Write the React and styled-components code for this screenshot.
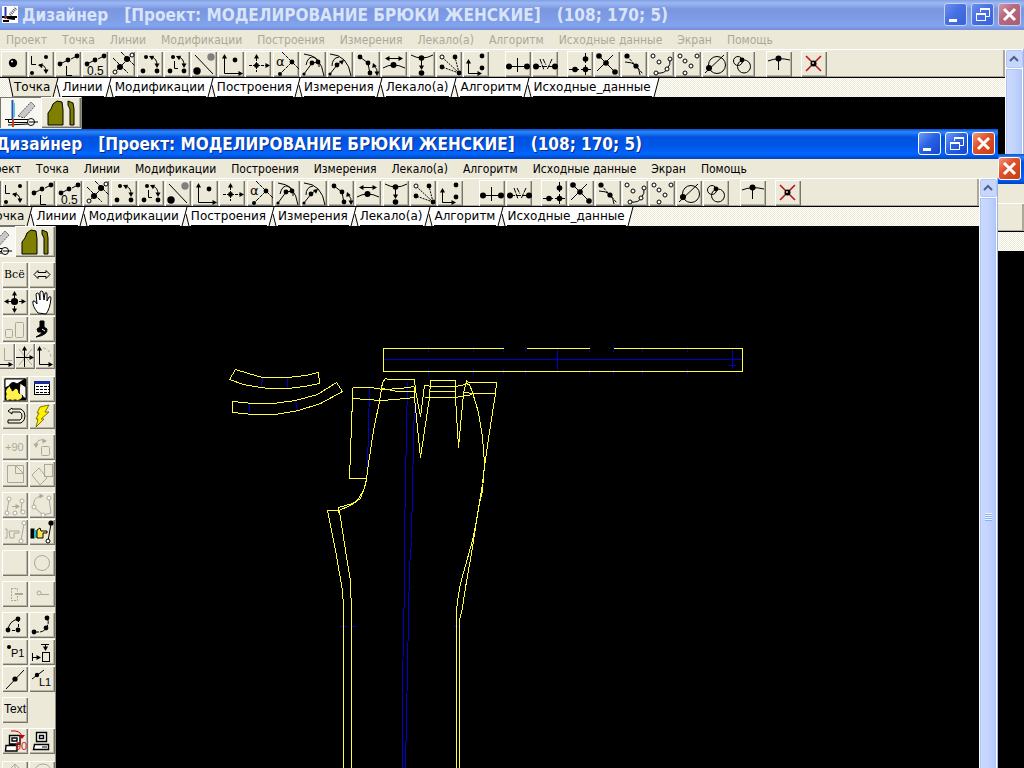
import React from 'react';
import styled, { createGlobalStyle, css } from 'styled-components';

const GlobalStyle = createGlobalStyle`
    * {
        box-sizing: border-box;
    }
    body {
        margin: 0;
        background: #000;
    }
    button {
        font: inherit;
        padding: 0;
        border: 0;
        color: inherit;
    }
`;

const hatch = css`
    background-color: #fffffb;
    background-image: conic-gradient(#ece9d8 25%, transparent 0 50%, #ece9d8 0 75%, transparent 0);
    background-size: 2px 2px;
`;

const raised = css`
    box-shadow: inset 1px 1px 0 #fff, inset -1px -1px 0 #77756b, inset -2px -2px 0 #b9b6a5;
`;

const Desktop = styled.main`
    position: relative;
    min-height: 100vh;
    overflow: hidden;
    background: #000;
`;

const WindowFrame = styled.section`
    position: absolute;
    top: ${props => props.$top}px;
    left: ${props => props.$shift}px;
    right: ${props => -props.$shift}px;
    bottom: 0;
    display: flex;
    flex-direction: column;
    overflow: hidden;
    background: #000;
`;

const TitleBar = styled.header`
    flex: none;
    display: flex;
    align-items: center;
    gap: 3px;
    height: 30px;
    padding: 0 3px 1px 2px;
    color: ${props => (props.$active ? '#fff' : '#d8e4f8')};
    background: ${props => (props.$active
        ? 'linear-gradient(#0a4fd0 0, #2b86fb 3px, #0053e1 8px, #0055e5 16px, #0066ff 25px, #0048c8 29px)'
        : 'linear-gradient(#7f9fe6 0, #9db8f2 3px, #7b96e0 9px, #7e9be4 18px, #82a5f0 26px, #7890da 29px)')};
`;

const TitleText = styled.h1`
    flex: 1;
    display: flex;
    gap: 16px;
    margin: 0;
    font-family: 'DejaVu Sans Condensed', 'DejaVu Sans', sans-serif;
    font-size: 17px;
    font-weight: 700;
    line-height: 28px;
    white-space: nowrap;
    text-shadow: ${props => (props.$active ? '1px 1px 0 #0a2a80' : 'none')};
`;

const CaptionButtons = styled.div`
    display: flex;
    gap: 4px;
`;

const CaptionButton = styled.button`
    width: 23px;
    height: 23px;
    border: 1px solid ${props => (props.$active ? '#fff' : '#c3d2f5')};
    border-radius: 3px;
    background: ${props => (props.$close
        ? (props.$active ? 'linear-gradient(135deg, #f09a80, #e0532c 40%, #c83c10)' : 'linear-gradient(135deg, #cf9aa8, #b7697d 40%, #ab5b70)')
        : (props.$active ? 'linear-gradient(135deg, #6f9bf8, #2a63e4 45%, #1445cc)' : 'linear-gradient(135deg, #6c8ff0, #4770e2 45%, #3a62da)'))};
    svg {
        display: block;
    }
`;

const MenuBar = styled.nav`
    flex: none;
    display: flex;
    gap: 15px;
    height: 19px;
    padding-left: 6px;
    font-family: 'DejaVu Sans Condensed', 'DejaVu Sans', sans-serif;
    font-size: 12px;
    line-height: 20px;
    color: ${props => (props.$active ? '#000' : '#aca899')};
    background: #ece9d8;
`;

const MenuItem = styled.button`
    background: none;
    white-space: nowrap;
`;

const Workspace = styled.div`
    flex: 1;
    display: flex;
    min-height: 0;
`;

const Sheet = styled.div`
    flex: 1;
    display: flex;
    flex-direction: column;
    min-width: 0;
`;

const ToolBar = styled.div`
    flex: none;
    display: flex;
    height: 29px;
    padding: 1px 0 0 1px;
    background: #ece9d8;
    border-top: 1px solid #fff;
    border-bottom: 1px solid #000;
    box-shadow: inset -2px -1px 0 #aca899;
`;

const ToolGroup = styled.div`
    display: flex;
    gap: 1px;
    margin-right: ${props => props.$after}px;
`;

const ToolButton = styled.button`
    flex: none;
    width: ${props => props.$width || 26}px;
    height: ${props => props.$height || 26}px;
    overflow: hidden;
    background: #ece9d8;
    ${raised}
    ${props => props.$pressed && css`
        background: #f8f7f0;
        box-shadow: inset 1px 1px 0 #77756b;
    `}
    svg {
        display: block;
    }
`;

const TabStrip = styled.div`
    flex: none;
    display: flex;
    height: 19px;
    padding-left: 8px;
    font-family: 'DejaVu Sans', sans-serif;
    font-size: 12px;
    line-height: 18px;
    ${hatch}
`;

const Tab = styled.button`
    height: 19px;
    padding-right: 1px;
    color: #000;
    background: ${props => (props.$selected ? '#ece9d8' : '#fff')};
    border-bottom: 1px solid ${props => (props.$selected ? '#77756b' : '#000')};
    white-space: nowrap;
`;

const TabEdge = styled.svg`
    flex: none;
    display: block;
`;

const Body = styled.div`
    flex: 1;
    display: flex;
    min-height: 0;
`;

const SidePanel = styled.aside`
    flex: none;
    display: flex;
    flex-direction: column;
    gap: 5px;
    width: 82px;
    overflow: hidden;
    background: #ece9d8;
    border-right: 1px solid #8f8c7c;
`;

const SideGroup = styled.div`
    display: grid;
    grid-template-columns: repeat(2, 26px);
    gap: 1px;
    padding: ${props => (props.$spaced ? 2 : 0)}px 0 0 28px;
`;

const ModeGroup = styled.div`
    display: flex;
`;

const AxesRow = styled.div`
    grid-column: 1 / -1;
    display: flex;
    justify-content: flex-end;
`;

const Canvas = styled.div`
    flex: 1;
    min-width: 0;
    overflow: hidden;
    background: #000;
    svg {
        display: block;
    }
`;

const ScrollTrack = styled.div`
    flex: none;
    display: flex;
    flex-direction: column;
    width: 19px;
    padding: 1px 0 0 1px;
    background: #fff;
    border-right: 1px solid #9db4e8;
`;

const ScrollArrow = styled.button`
    flex: none;
    width: 17px;
    height: 18px;
    border: 1px solid #b5c7f3;
    border-radius: 2px;
    background: #c6d6fd;
    svg {
        display: block;
    }
`;

const ScrollThumb = styled.div`
    flex: 1;
    display: flex;
    justify-content: center;
    margin-top: 1px;
    width: 16px;
    padding-top: 314px;
    border: 1px solid #b0c3f2;
    border-bottom: 0;
    background: linear-gradient(90deg, #cbd9fe, #c1d2fc 60%, #b4c9fa);
`;

const Grip = styled.span`
    width: 7px;
    height: 8px;
    background: repeating-linear-gradient(#eef4fe 0 1px, #8cb0f8 1px 2px);
`;

/* ---------- icon parts ---------- */

const Dot = ({ x, y, r = 2.4, fill = '#000' }) => <circle cx={x} cy={y} r={r} fill={fill} stroke="none" />;
const Ring = ({ x, y, r = 2 }) => <circle cx={x} cy={y} r={r} fill="#fff" />;
const Head = ({ x, y, turn = 0 }) => (
    <path d="M0 0 L-2.5 4.5 L2.5 4.5 Z" fill="currentColor" stroke="none" transform={`translate(${x} ${y}) rotate(${turn})`} />
);

const Glyph = ({ children, width = 26, height = 26, muted }) => (
    <svg width={width} height={height} viewBox={`0 0 ${width} ${height}`} fill="none"
        stroke="currentColor" color={muted ? '#aca899' : '#000'} aria-hidden="true">
        {children}
    </svg>
);

const pointTools = [
    ['Точка', <><Dot x={12} y={12} r={4.2} /><circle cx="11" cy="10.500" r="1" fill="#fff" stroke="none" /></>],
    ['Точка L', <><path d="M3.500 5V13.500H8M11 14Q18 13 18 21" /><Head x={10} y={14} turn={-80} /><Head x={18} y={23} turn={180} /><Dot x={18} y={6} r={2} /><Dot x={4} y={22} r={2} /></>],
    ['Длина', <><path d="M5 13L13 9M16 8L22 5" /><path d="M11.500 15V24.500H17" /><Dot x={5} y={13} /><Dot x={13} y={9} /><Dot x={22} y={5} /></>],
    ['Доля', <><path d="M5 13L13 9M16 8L22 5" /><Dot x={5} y={13} /><Dot x={13} y={9} /><Dot x={22} y={5} /><text x="5" y="24" fontSize="12" fontFamily="Liberation Sans, sans-serif" fill="#000" stroke="none">0.5</text></>],
    ['Пересечение', <><path d="M6 21L23 4M4 7L19 22M12 1L26 15" strokeDasharray="4 1" /><Ring x={23} y={4} /><Ring x={6} y={21} /><Dot x={18} y={8} r={3} /><Dot x={11} y={16} r={3} /></>],
    ['Поворот', <><path d="M15 6Q20 8 20 14" /><Head x={12} y={5} turn={-65} /><Head x={20} y={17} turn={180} /><Dot x={9} y={6} r={2} /><Dot x={6} y={20} /><Dot x={20} y={20} /></>],
    ['Поворот L', <><path d="M15 6Q20 8 20 14M10.500 10V17.500H14" /><Head x={12} y={5} turn={-65} /><Head x={20} y={17} turn={180} /><Dot x={9} y={6} r={2} /><Dot x={6} y={20} /><Dot x={20} y={20} /></>],
    ['Отражение', <><path d="M4 4L22 23" /><Dot x={6} y={20} r={3.7} /><Dot x={20} y={6} r={3.7} fill="#808080" /></>],
    ['Оси', <><path d="M6.500 6V22.500H22" /><Head x={6.5} y={3} /><Head x={25} y={22.5} turn={90} /><Dot x={17} y={9} /></>],
    ['Сдвиг', <><path d="M4 14.500H22M11.500 7V21" strokeDasharray="3 1" /><Head x={11.5} y={3} /><Head x={25} y={14.5} turn={90} /><Dot x={11.5} y={14.5} /></>],
    ['Угол', <><path d="M9 1L26 18M19 11L7 23" strokeDasharray="4 1" /><text x="3" y="15" fontSize="13" fontFamily="DejaVu Sans, sans-serif" fill="#000" stroke="none">α</text><Dot x={19} y={11} /><Dot x={7} y={23} r={2} /></>],
    ['Дуга', <><path d="M4 3Q21 4 24 25M4 23L12 12L19 11M6 14Q8 5 14 6Q20 9 19 16" /><Dot x={12} y={12} /><Dot x={18} y={11} /><Dot x={4} y={23} r={1.6} /></>],
    ['Радиус', <><path d="M3 3Q21 4 24 25M3 23L10 14L15 10M5 15Q5 7 12 6" /><Head x={17} y={9} turn={50} /><Dot x={10} y={14} /><Dot x={3} y={23} r={1.6} /></>],
    ['Вдоль линии', <><path d="M6 6L14 12L16 23M20 15Q24 18 23 22" /><Head x={19} y={12} turn={-20} /><Head x={23} y={25} turn={180} /><Dot x={6} y={6} /><Dot x={14} y={12} /><Dot x={16} y={22} /></>],
    ['Касание', <><path d="M7 7.500H19M2 17Q12 11 24 17" /><Head x={4} y={7.5} turn={-90} /><Head x={22} y={7.5} turn={90} /><Dot x={12.5} y={14} r={3} /></>],
    ['Проекция', <><path d="M2 4Q13 10 24 4M12.500 8V18" /><Head x={12.5} y={19} turn={180} /><Dot x={12.5} y={7} r={2.8} /><Dot x={12.5} y={22} r={2.8} /></>],
    ['Веер', <><path d="M23 22L7 7M23 22L19 6M23 22L6 16" strokeDasharray="2 1" /><Ring x={6} y={6} /><Dot x={19} y={6} /><Dot x={6} y={16} /><Dot x={23} y={22} /></>],
    ['Координаты', <><path d="M5.500 11V22.500H15" /><Head x={5.5} y={8} /><Head x={19} y={22.5} turn={90} /><Dot x={19} y={5} /><Dot x={19} y={17} /></>],
    ['Деление', <><path d="M4 15.500H22M12.500 7V21" /><Dot x={4} y={15.5} r={3} /><Dot x={22} y={15.5} r={3} /></>],
    ['Разрез', <><path d="M4 15.500H22M8 8L12 19M20 8L15 19M11 8L14 14" strokeDasharray="5 1" /><Dot x={4} y={15.5} r={3} /><Dot x={23} y={15.5} r={3} /></>],
    ['Перпендикуляр', <><path d="M18.500 2V26M2 18.500H26" strokeDasharray="4 2" /><Dot x={18.5} y={8} r={2.8} /><Dot x={18.5} y={18.5} r={2.8} /><Dot x={8} y={18.5} r={2.8} /></>],
    ['Пересечение линий', <><path d="M5 5L21 21M19 4L3 20" /><Dot x={5} y={5} r={2.8} /><Dot x={12} y={12} r={2.8} /><Dot x={21} y={21} r={2.8} /></>],
    ['Кривая', <><path d="M6 5L22 23" strokeDasharray="3 1" /><path d="M4 11Q18 11 19 24" /><Dot x={6} y={5} r={2.6} /><Dot x={15} y={15} r={2.6} /></>],
    ['Контур', <><path d="M8 22Q17 23 19 18Q23 14 22 8" /><Ring x={5} y={5} /><Ring x={11} y={11} /><Ring x={22} y={8} /><Ring x={19} y={18} /><Ring x={8} y={22} /></>],
    ['Точки', <><Ring x={5} y={5} /><Ring x={10} y={10} /><Ring x={22} y={5} /><Ring x={16} y={15} /><Ring x={10} y={22} /></>],
    ['Окружность', <><circle cx="15" cy="14" r="8.500" /><path d="M22 4L3 22" /><Dot x={7} y={17} r={3} /></>],
    ['Окружности', <><circle cx="9" cy="10" r="4.500" /><circle cx="15" cy="15.500" r="6.500" /><Dot x={13} y={9} r={2.4} /></>],
    ['Узел', <><path d="M2 10Q12 6 24 9M12.500 8V19" /><Dot x={12.5} y={7.5} r={3} /></>],
    ['Удалить', <><path d="M5 5L20 20M20 5L5 20" stroke="#c0141c" strokeWidth="1.600" /><Dot x={12.5} y={12.5} r={3} /><Dot x={12} y={12} r={1} fill="#ddd" /></>],
];

// [first tool, last tool, space after the group]
const toolGroups = [[0, 5, 2], [5, 10, 2], [10, 15, 2], [15, 18, 16], [18, 20, 9], [20, 27, 11], [27, 28, 9], [28, 29, 0]];

const labelFont = { fontFamily: 'Liberation Sans, sans-serif', stroke: 'none', fill: 'currentColor' };

const sideTools = [
    { tools: [
        ['Всё', <text x="2" y="16" fontSize="11" {...labelFont} fontFamily="DejaVu Serif, serif">Всё</text>],
        ['Ширина', <path d="M5 12.500L9 8.500V10.500H17V8.500L21 12.500L17 16.500V14.500H9V16.500Z" />],
        ['Переместить', <><path d="M5 12.500H21M12.500 5V21" strokeDasharray="4 8" /><Head x={12.5} y={2} /><Head x={12.5} y={24} turn={180} /><Head x={2} y={12.5} turn={-90} /><Head x={24} y={12.5} turn={90} /><Dot x={12.5} y={12.5} r={3.6} /></>],
        ['Рука', <path d="M9 24Q3 17 4 12Q6 11 8 15L7 5Q8 3 10 5L11 11V3Q13 1 14 3L15 11L16 4Q18 3 18 5V12L20 8Q22 7 22 9Q21 20 17 25Z" fill="#fff" />],
        ['Масштаб', <><rect x="3.500" y="13.500" width="7" height="8" rx="1" /><rect x="13.500" y="6.500" width="8" height="15" rx="1" /></>, true],
        ['Перо', <><path d="M11 5H15V11L18 13Q19 19 7 21Q13 18 13 16L9 16L8 13L11 11Z" fill="#000" /><path d="M13 13L16 15" stroke="#fff" /></>],
    ], axes: true },
    { spaced: true, tools: [
        ['Детали', <><rect x="3" y="3" width="21" height="21" fill="#000" /><path d="M3 3H23L15 8Q10 4 7 10L3 12Z" fill="#fff" /><path d="M18 7L24 11V23L17 18Z" fill="#f7f5e8" /><path d="M4 13L8 10L10 15L15 12L17 17L21 20L18 24H4Z" fill="#fff14a" strokeDasharray="3 2" /></>],
        ['Таблица', <><rect x="5.500" y="5.500" width="15" height="13" fill="#fff" /><path d="M5 6.500H21" stroke="#182a9c" strokeWidth="3" /><path d="M7 10.500H20M7 13.500H20M7 16.500H20" strokeDasharray="3 1" /></>],
        ['Отменить', <path d="M10 5L6 8L10 11V9H18Q20 10 20 13Q20 16 18 17H6V20H19Q23 18 23 13Q23 8 19 6H10Z" fill="#ece9d8" />],
        ['Молния', <path d="M11 4L20 2L16 9H20L12 16H15L7 24L9 16H7L10 10H8Z" fill="#fff200" stroke="#807400" />],
    ] },
    { tools: [
        ['+90', <text x="3" y="17" fontSize="11" {...labelFont}>+90</text>, true],
        ['Повернуть', <><rect x="12.500" y="12.500" width="8" height="9" rx="1" /><path d="M7 11Q8 5 14 6" /><Head x={7} y={14} turn={180} /><Head x={18} y={7} turn={90} /></>, true],
        ['Угол листа', <path d="M5.500 4.500H13.500V12.500H21.500V21.500H5.500ZM13.500 4.500H21.500V12.500L13.500 4.500" />, true],
        ['Наклон', <><rect x="15.500" y="3.500" width="8" height="12" /><path d="M3 14L10 7L18 17L11 24Z" /></>, true],
    ] },
    { tools: [
        ['Связь', <><path d="M7 7L5 20M20 9L19 20M10 14.500H16" /><Head x={18} y={14.5} turn={90} /><Ring x={7} y={7} /><Ring x={5} y={21} /><Ring x={13} y={21} /><Ring x={20} y={9} /><Ring x={21} y={20} /></>, true],
        ['Полигон', <><path d="M5 15Q3 6 12 4M5 15L14 23L22 21L20 6" /><Head x={15} y={4} turn={90} /><Ring x={5} y={15} /><Ring x={20} y={6} /><Ring x={14} y={23} /></>, true],
        ['Указать', <><path d="M3 10H5V19H3M7 12H17V14H12V19H8ZM22 5L19 21" /><Ring x={22} y={4} /><Ring x={19} y={22} /></>, true],
        ['Выбрать', <><rect x="2" y="10" width="3" height="9" fill="#000" /><rect x="5" y="11" width="3" height="8" fill="#27b7c4" stroke="none" /><path d="M8 11L11 9L12 12H18V14H14V19H8Z" fill="#ffe34d" /><path d="M22 5L19 22" /><Dot x={22} y={4} r={2.6} /><Ring x={19} y={22} /></>],
    ] },
    { tools: [
        ['Пусто', null],
        ['Круг', <circle cx="13" cy="13" r="7.500" />, true],
    ] },
    { tools: [
        ['Фрагмент', <><path d="M9.500 7.500H15.500V11M15.500 15V19.500H9.500V7.500" strokeDasharray="2 1" /><path d="M13 13H21" strokeWidth="2" /></>, true],
        ['Ключ', <><circle cx="10" cy="12" r="2" /><path d="M12 13.500H20" /></>, true],
    ] },
    { tools: [
        ['Сектор', <><path d="M6 18Q7 9 16 7" /><path d="M16.500 7V18.500H6" strokeDasharray="3 2" /><Dot x={16} y={7} /><Dot x={6} y={18} /><Dot x={16} y={18} /></>],
        ['Сплайн', <><path d="M5 20H10Q15 20 17 16Q21 11 18 6" strokeDasharray="5 1" /><Dot x={18} y={6} /><Dot x={17} y={16} /><Dot x={5} y={20} /></>],
        ['P1', <><Dot x={7} y={8} r={2} /><text x="9" y="18" fontSize="11" {...labelFont}>P1</text></>],
        ['Размер', <><rect x="13.500" y="13.500" width="7" height="9" /><path d="M3.500 14V22M4 18.500H9M12 5.500H20M16.500 6V9" /><Head x={12} y={18.5} turn={90} /><Head x={16.5} y={12} turn={180} /></>],
        ['Отрезок', <><path d="M4 23L22 4" /><Dot x={13} y={13} r={2.6} /></>],
        ['L1', <><path d="M3 13L15 4" /><Dot x={8} y={9} r={2.2} /><text x="10" y="20" fontSize="11" {...labelFont}>L1</text></>],
    ] },
    { tools: [
        ['Text', <text x="2" y="16" fontSize="12" {...labelFont}>Text</text>],
    ] },
    { tools: [
        ['Экран 90', <><path d="M7.500 7.500H18V16H7.500ZM10 10H15V13H10ZM4 17.500H15V23H3.500Z" fill="#fff" strokeWidth="1.400" /><path d="M9 3Q18 2 20 8" stroke="#c00" /><path d="M17 7H23L20 11Z" fill="#c00" stroke="none" /><text x="13" y="22" fontSize="11" {...labelFont} fill="#d01818">90</text></>],
        ['Экран', <><path d="M7.500 4.500H17.500V13.500H7.500ZM10.500 7.500H14.500V10.500H10.500ZM5.500 16.500H19.500V21.500H4.500Z" fill="#fff" strokeWidth="1.400" /><path d="M13 19H18" /></>],
    ] },
    { spaced: true, tools: [
        ['Вверх', <path d="M13 3V20M9 7L13 3L17 7" />, true],
        ['Вид', <circle cx="14" cy="12" r="9" />, true],
    ] },
];

const menuItems = ['Проект', 'Точка', 'Линии', 'Модификации', 'Построения', 'Измерения', 'Лекало(а)', 'Алгоритм', 'Исходные данные', 'Экран', 'Помощь'];
const tabs = ['Точка', 'Линии', 'Модификации', 'Построения', 'Измерения', 'Лекало(а)', 'Алгоритм', 'Исходные_данные'];

const AppIcon = () => (
    <svg width="17" height="18" viewBox="0 0 17 18" aria-hidden="true">
        <rect width="16" height="17" fill="#fff" />
        <path d="M3.500 1V10" stroke="#2438b0" strokeWidth="2" />
        <path d="M8 9L14 2" stroke="#555" strokeWidth="3" strokeDasharray="1 1" />
        <path d="M0 11H15M1 15H7M5 12L13 13" stroke="#000" strokeWidth="2" />
        <path d="M3.500 10V13" stroke="#b03030" strokeWidth="2" />
    </svg>
);

const Caption = ({ active }) => (
    <CaptionButtons>
        <CaptionButton $active={active} aria-label="Свернуть">
            <svg width="21" height="21"><path d="M4 16.500H12" stroke="#fff" strokeWidth="3" /></svg>
        </CaptionButton>
        <CaptionButton $active={active} aria-label="Восстановить">
            <svg width="21" height="21" fill="none" stroke="#fff">
                <path d="M8.500 8V5.500H17.500V12.500H14" /><path d="M8 5H18" strokeWidth="2" />
                <rect x="4.500" y="9.500" width="9" height="7" /><path d="M4 10H14" strokeWidth="2" />
            </svg>
        </CaptionButton>
        <CaptionButton $active={active} $close aria-label="Закрыть">
            <svg width="21" height="21"><path d="M5 5L16 16M16 5L5 16" stroke="#fff" strokeWidth="3" /></svg>
        </CaptionButton>
    </CaptionButtons>
);

const Tools = () => (
    <ToolBar role="toolbar">
        {toolGroups.map(([from, to, after]) => (
            <ToolGroup key={from} $after={after}>
                {pointTools.slice(from, to).map(([name, icon]) => (
                    <ToolButton key={name} aria-label={name}><Glyph>{icon}</Glyph></ToolButton>
                ))}
            </ToolGroup>
        ))}
    </ToolBar>
);

const Tabs = () => (
    <TabStrip role="tablist">
        <TabEdge width="6" height="19"><path d="M1 0H6V19H5Z" fill="#ece9d8" /><path d="M1 0L5 19" stroke="#000" /></TabEdge>
        {tabs.map((name, i) => (
            <React.Fragment key={name}>
                <Tab role="tab" aria-selected={i === 0} $selected={i === 0}>{name}</Tab>
                <TabEdge width="11" height="19">
                    <path d="M0 0H7L2 19H0Z" fill={i === 0 ? '#ece9d8' : '#fff'} />
                    {i < tabs.length - 1 && <path d="M7 0H11V19H9L6 8Z" fill="#fff" />}
                    <path d={i < tabs.length - 1 ? 'M7 0L2 19M6 7L9 19' : 'M7 0L2 19'} stroke="#000" fill="none" />
                </TabEdge>
            </React.Fragment>
        ))}
    </TabStrip>
);

const Modes = () => (
    <ModeGroup>
        <ToolButton $width={41} $height={31} $pressed aria-label="Чертёж">
            <Glyph width={41} height={31}>
                <path d="M18 19L31 5L35 9L24 21Z" fill="#c9c9c9" stroke="#555" strokeDasharray="2 1" />
                <path d="M5 22.500H28M8 28L28 27M8.500 22V25.500H32" />
                <circle cx="31" cy="25" r="3.500" fill="#fff" /><path d="M29 25H38" />
                <path d="M12.500 3V22" stroke="#1b56b8" strokeWidth="2" /><path d="M14.500 6V20" stroke="#58c4e0" />
                <path d="M13 22V30" stroke="#c04020" strokeWidth="2" />
            </Glyph>
        </ToolButton>
        <ToolButton $width={40} $height={31} aria-label="Лекала">
            <Glyph width={40} height={31}>
                <path d="M7 28V16L10 12L12 7L16 4L21 5L22 13V28Z" fill="#7f7f00" />
                <path d="M27 4L32 6L33 12V28H29V12L27 8Z" fill="#7f7f00" />
            </Glyph>
        </ToolButton>
    </ModeGroup>
);

const Axes = () => (
    <AxesRow>
        <ToolButton $width={20} aria-label="Ось X">
            <Glyph width={20}><path d="M9.500 5V17.500H17" stroke="#aca899" /><path d="M0 21.500H15" /><Head x={18} y={21.5} turn={90} /></Glyph>
        </ToolButton>
        <ToolButton $width={20} aria-label="Все оси">
            <Glyph width={20}><path d="M4 6L17 22M17 6L4 22" stroke="#aca899" /><path d="M9.500 6V24M1 14.500H17" /><Head x={9.5} y={3} /><Head x={19} y={14.5} turn={90} /></Glyph>
        </ToolButton>
        <ToolButton $width={20} aria-label="Поворот осей">
            <Glyph width={20}><path d="M8 5Q16 6 16 16" stroke="#aca899" strokeDasharray="3 2" /><path d="M4.500 6V21.500H15" /><Head x={4.5} y={3} /><Head x={18} y={21.5} turn={90} /></Glyph>
        </ToolButton>
    </AxesRow>
);

const beltMarks = [428, 473, 503, 525, 589, 613, 642, 687];

const Drawing = () => (
    <svg width="924" height="542" viewBox="56 226 924 542" fill="none" shapeRendering="crispEdges" role="img" aria-label="Брюки женские">
        <g transform="translate(0.500 0.500)">
            <g stroke="#0000c8">
                <path d="M383 359H742M557 348V371M732 348V368M728 365H735" />
                {beltMarks.map(x => <path key={x} d={`M${x} 346V351M${x} 368V373`} strokeDasharray="2 1" />)}
                <path d="M262 377L261 387M287 377V388M249 403V413M295 400L297 410" />
                <path d="M369 388L367 467" />
                <path d="M407 382L405 480L404 540V600L403 617L402 700V768" />
                <path d="M414 398L412 487L411 540L409 567L407 667L405 768" />
                <path d="M339 626H346M351 626H355M453 626H460" />
            </g>
            <g stroke="#ffff3c">
                <path d="M503 348H383V371H742V348H613M526 348H589" />
                <path d="M229 379L235 369L248 373L262 377H287L305 375L318 372L319 383L304 386L287 388H268L260 387L243 384Z" />
                <path d="M232 401L253 403H273L295 400L317 394L336 382L342 391L320 403L298 410L275 414H253L232 412Z" />
                <path d="M352 387H370L383 389L400 388L414 386M352 398L380 400L395 399L414 397M352 387V398L349 478H366" />
                <path d="M382 388L397 391H415" />
                <path d="M385 378L382 382L379 401L373 430L367 470L366 480L363 490L357 500L350 505L338 510H327" />
                <path d="M366 478L364 487L360 498L352 503L338 507V512" />
                <path d="M385 378L388 379H414L415 390L420 416L424 385L433 386H455L465 384" />
                <path d="M414 386V397L420 457L429 397L430 380H455V397L458 447L463 393L466 380L468 382H496L495 393L488 438L484 466L482 483L477 515L472 540L465 565L460 583L457 600L456 612V768" />
                <path d="M428 391H455M424 397H455L472 394M464 392L473 393H495" />
                <path d="M465 383L469 384L472 392L478 412L482 437L484 463L482 490L478 507L472 547L465 587L462 607L459 620V768" />
                <path d="M327 510L335 550L342 590L343 607V768M339 511L345 550L350 580L351 615V768" />
            </g>
        </g>
    </svg>
);

const DesignerWindow = ({ top, shift = 0, active, children }) => (
    <WindowFrame $top={top} $shift={shift}>
        <TitleBar $active={active}>
            <AppIcon />
            <TitleText $active={active}>
                <span>Дизайнер</span>
                <span>[Проект: МОДЕЛИРОВАНИЕ БРЮКИ ЖЕНСКИЕ]</span>
                <span>(108; 170; 5)</span>
            </TitleText>
            <Caption active={active} />
        </TitleBar>
        <MenuBar $active={active}>
            {menuItems.map(name => <MenuItem key={name}>{name}</MenuItem>)}
        </MenuBar>
        <Workspace>
            <Sheet>
                <Tools />
                <Tabs />
                <Body>
                    <SidePanel>
                        <Modes />
                        {sideTools.map(({ tools, axes, spaced }) => (
                            <SideGroup key={tools[0][0]} $spaced={spaced}>
                                {tools.map(([name, icon, muted]) => (
                                    <ToolButton key={name} aria-label={name}><Glyph muted={muted}>{icon}</Glyph></ToolButton>
                                ))}
                                {axes && <Axes />}
                            </SideGroup>
                        ))}
                    </SidePanel>
                    <Canvas>{children}</Canvas>
                </Body>
            </Sheet>
            <ScrollTrack>
                <ScrollArrow aria-label="Вверх">
                    <svg width="15" height="16" fill="none"><path d="M3 10L7 6L11 10" stroke="#4d6185" strokeWidth="2" /></svg>
                </ScrollArrow>
                <ScrollThumb><Grip /></ScrollThumb>
            </ScrollTrack>
        </Workspace>
    </WindowFrame>
);

const BlankWindow = () => (
    <WindowFrame $top={154} $shift={0}>
        <TitleBar $active>
            <TitleText />
            <Caption active />
        </TitleBar>
        <MenuBar />
        <ToolBar />
        <TabStrip />
    </WindowFrame>
);

const App = () => (
    <Desktop>
        <GlobalStyle />
        <DesignerWindow top={0} />
        <BlankWindow />
        <DesignerWindow top={129} shift={-26} active>
            <Drawing />
        </DesignerWindow>
    </Desktop>
);

export default App;
